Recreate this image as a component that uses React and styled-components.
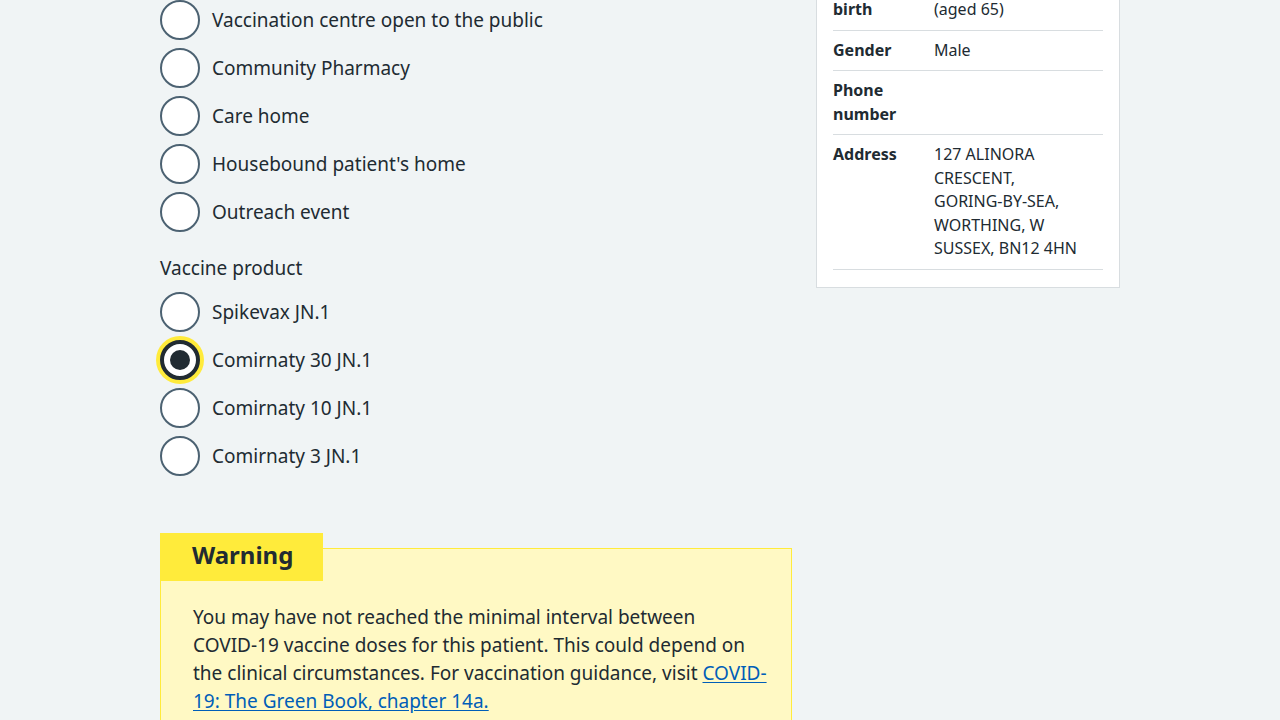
import React from "react";
import styled, { createGlobalStyle } from "styled-components";

const GlobalStyle = createGlobalStyle`
  html, body { margin: 0; padding: 0; background: #f0f4f5; }
  body {
    font-family: "Noto Sans", "Open Sans", Arial, sans-serif;
    color: #212b32;
    -webkit-font-smoothing: antialiased;
    overflow: hidden;
  }
  * { box-sizing: border-box; }
`;

const Container = styled.div`
  width: 960px;
  margin: 0 auto;
  display: grid;
  grid-template-columns: 632px 304px;
  column-gap: 24px;
  align-items: start;
`;

const MainColumn = styled.div`
  display: flex;
  flex-direction: column;
`;

const FormGroup = styled.fieldset`
  border: 0;
  margin: 0 0 24px;
  padding: 0;
  min-width: 0;
`;

const Legend = styled.legend`
  padding: 0;
  margin: 0 0 8px;
  font-size: 19px;
  line-height: 28px;
  position: relative;
  top: -2px;
`;

const RadioList = styled.div`
  display: flex;
  flex-direction: column;
  gap: 8px;
`;

const RadioItem = styled.label`
  display: flex;
  align-items: center;
  gap: 12px;
  min-height: 40px;
  cursor: pointer;
`;

const RadioCircle = styled.span`
  flex: 0 0 40px;
  width: 40px;
  height: 40px;
  border-radius: 50%;
  background: #ffffff;
  border: ${(p) => (p.$checked ? "4px solid #212b32" : "2px solid #4c6272")};
  box-shadow: ${(p) => (p.$checked ? "0 0 0 4px #ffeb3b" : "none")};
  display: flex;
  align-items: center;
  justify-content: center;
`;

const RadioDot = styled.span`
  width: 20px;
  height: 20px;
  border-radius: 50%;
  background: #212b32;
`;

const RadioLabel = styled.span`
  font-size: 19px;
  line-height: 28px;
`;

const Callout = styled.div`
  margin-top: 48px;
  background: #fff9c4;
  border: 1px solid #ffeb3b;
  padding: 0 20px 32px 32px;
`;

const CalloutLabel = styled.h3`
  display: block;
  width: fit-content;
  margin: -16px 0 0 -33px;
  padding: 0 30px 0 32px;
  height: 48px;
  line-height: 44px;
  background: #ffeb3b;
  font-size: 24px;
  font-weight: 700;
  color: #212b32;
`;

const CalloutText = styled.p`
  margin: 22px 0 0;
  font-size: 19px;
  line-height: 28px;
`;

const NoBreak = styled.span`
  white-space: nowrap;
`;

const Link = styled.a`
  color: #005eb8;
  text-decoration: underline;
  text-underline-offset: 2px;
`;

const Card = styled.aside`
  margin-top: -155px;
  background: #ffffff;
  border: 1px solid #d8dde0;
  padding: 16px 16px 17px;
`;

const SummaryList = styled.dl`
  margin: 0;
  display: flex;
  flex-direction: column;
`;

const SummaryRow = styled.div`
  display: grid;
  grid-template-columns: 101px 1fr;
  border-bottom: 1px solid #d8dde0;
  padding: 8px 0;
  font-size: 16px;
  line-height: 23.5px;
`;

const Key = styled.dt`
  font-weight: 700;
  padding-right: 8px;
`;

const Value = styled.dd`
  margin: 0;
`;

const Line = styled.div`
  white-space: nowrap;
`;

const locations = [
  "Vaccination centre open to the public",
  "Community Pharmacy",
  "Care home",
  "Housebound patient's home",
  "Outreach event",
];

const products = [
  { label: "Spikevax JN.1" },
  { label: "Comirnaty 30 JN.1", checked: true },
  { label: "Comirnaty 10 JN.1" },
  { label: "Comirnaty 3 JN.1" },
];

const patient = [
  { key: "NHS number", value: ["943 476 5919"] },
  { key: "Name", value: ["Thomas Gardner"] },
  { key: "Date of birth", value: ["14 May 1959", "(aged 65)"] },
  { key: "Gender", value: ["Male"] },
  { key: "Phone number", value: [] },
  {
    key: "Address",
    value: [
      "127 ALINORA",
      "CRESCENT,",
      "GORING-BY-SEA,",
      "WORTHING, W",
      "SUSSEX, BN12 4HN",
    ],
  },
];

function Radio({ label, checked }) {
  return (
    <RadioItem>
      <RadioCircle $checked={checked}>{checked && <RadioDot />}</RadioCircle>
      <RadioLabel>{label}</RadioLabel>
    </RadioItem>
  );
}

export default function App() {
  return (
    <>
      <GlobalStyle />
      <Container>
        <MainColumn>
          <FormGroup>
            <RadioList>
              {locations.map((l) => (
                <Radio key={l} label={l} />
              ))}
            </RadioList>
          </FormGroup>
          <FormGroup>
            <Legend>Vaccine product</Legend>
            <RadioList>
              {products.map((p) => (
                <Radio key={p.label} label={p.label} checked={p.checked} />
              ))}
            </RadioList>
          </FormGroup>
          <Callout>
            <CalloutLabel>Warning</CalloutLabel>
            <CalloutText>
              You may have not reached the minimal interval between{" "}
              <NoBreak>COVID-19</NoBreak> vaccine doses for this patient. This
              could depend on the clinical circumstances. For vaccination
              guidance, visit{" "}
              <Link href="#">COVID-19: The Green Book, chapter 14a.</Link>
            </CalloutText>
          </Callout>
        </MainColumn>
        <Card>
          <SummaryList>
            {patient.map((r) => (
              <SummaryRow key={r.key}>
                <Key>{r.key}</Key>
                <Value>
                  {r.value.map((v, i) => (
                    <Line key={i}>{v}</Line>
                  ))}
                </Value>
              </SummaryRow>
            ))}
          </SummaryList>
        </Card>
      </Container>
    </>
  );
}
